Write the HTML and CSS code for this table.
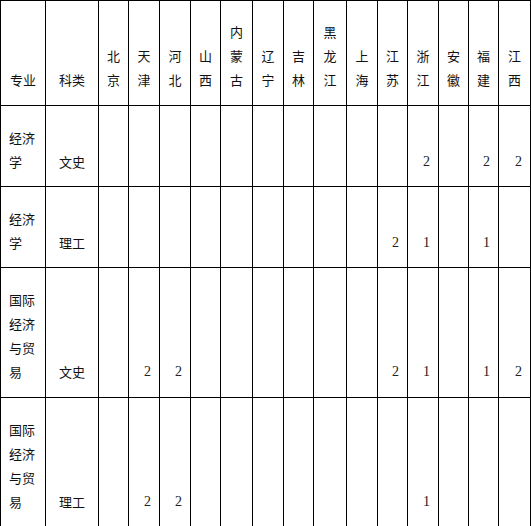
FILE: index.html
```html
<!DOCTYPE html>
<html lang="zh">
<head>
<meta charset="utf-8">
<link rel="stylesheet" href="styles.css">
</head>
<body>
<table class="plan">
  <colgroup>
    <col class="c-major"><col class="c-type">
    <col class="w30"><col class="w31"><col class="w31"><col class="w30"><col class="w32"><col class="w31"><col class="w30"><col class="w33"><col class="w31"><col class="w30"><col class="w31"><col class="w30"><col class="w30"><col class="w32">
  </colgroup>
  <tr class="head">
    <th>专业</th><th>科类</th>
    <th>北京</th><th>天津</th><th>河北</th><th>山西</th><th>内蒙古</th><th>辽宁</th><th>吉林</th><th>黑龙江</th><th>上海</th><th>江苏</th><th>浙江</th><th>安徽</th><th>福建</th><th>江西</th>
  </tr>
  <tr class="short">
    <td class="major">经济学</td><td class="type">文史</td>
    <td></td><td></td><td></td><td></td><td></td><td></td><td></td><td></td><td></td><td></td><td class="n">2</td><td></td><td class="n">2</td><td class="n">2</td>
  </tr>
  <tr class="short">
    <td class="major">经济学</td><td class="type">理工</td>
    <td></td><td></td><td></td><td></td><td></td><td></td><td></td><td></td><td></td><td class="n">2</td><td class="n">1</td><td></td><td class="n">1</td><td></td>
  </tr>
  <tr class="tall">
    <td class="major">国际经济与贸易</td><td class="type">文史</td>
    <td></td><td class="n">2</td><td class="n">2</td><td></td><td></td><td></td><td></td><td></td><td></td><td class="n">2</td><td class="n">1</td><td></td><td class="n">1</td><td class="n">2</td>
  </tr>
  <tr class="tall">
    <td class="major">国际经济与贸易</td><td class="type">理工</td>
    <td></td><td class="n">2</td><td class="n">2</td><td></td><td></td><td></td><td></td><td></td><td></td><td></td><td class="n">1</td><td></td><td></td><td></td>
  </tr>
</table>
</body>
</html>
```
FILE: styles.css
```css
html, body {
  margin: 0;
  padding: 0;
  background: #fff;
}
.plan {
  border-collapse: collapse;
  table-layout: fixed;
  width: 531px;
  font-family: "Noto Sans CJK SC", "Noto Sans", sans-serif;
  font-size: 13px;
  line-height: 24px;
  color: #111;
}
.c-major { width: 45px; }
.c-type { width: 53px; }
.w30 { width: 30px; }
.w31 { width: 31px; }
.w32 { width: 32px; }
.w33 { width: 33px; }
.plan th, .plan td {
  border: 1px solid #000;
  vertical-align: bottom;
  padding: 0 6px 12px 6px;
  font-weight: normal;
  text-align: center;
  word-break: break-all;
  overflow: hidden;
}
.head th { height: 91px; padding-bottom: 13px; }
.short td { height: 68px; }
.tall td { height: 116px; padding-bottom: 13px; }
.plan td.major {
  text-align: left;
  padding-left: 8px;
  padding-right: 7px;
}
.plan td.n {
  text-align: right;
  padding-right: 8px;
  padding-left: 2px;
  font-family: "Liberation Serif", "Times New Roman", serif;
  font-size: 14px;
  color: #222;
}
```
